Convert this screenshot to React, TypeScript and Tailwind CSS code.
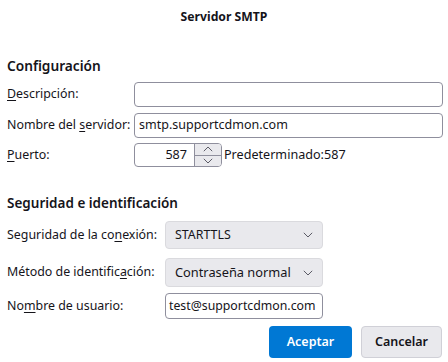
import React from "react";

const Chevron = ({ up = false, className = "" }: { up?: boolean; className?: string }) => (
  <svg width="10" height="6" viewBox="0 0 10 6" className={className} fill="none">
    <path d={up ? "M0.8 5.2 L5 1 L9.2 5.2" : "M0.8 0.8 L5 5 L9.2 0.8"} stroke="#5b5b66" strokeWidth="1" />
  </svg>
);

const U = ({ children }: { children: React.ReactNode }) => <span className="underline underline-offset-2">{children}</span>;

export default function App() {
  return (
    <div
      className="w-[448px] h-[362px] bg-white text-[#15141a] text-[12.4px] pl-[7px] pr-[5px] overflow-hidden whitespace-nowrap"
      style={{ fontFamily: '"Noto Sans", "Open Sans", sans-serif' }}
    >
      <div className="h-[34px] flex items-center justify-center font-bold text-[12.2px] pr-[2px]">Servidor SMTP</div>

      <div className="mt-[22px] h-[20px] flex items-center font-semibold text-[13.7px]">Configuración</div>

      <div className="mt-[6px] h-[25px] flex items-center">
        <div className="w-[127px]"><U>D</U>escripción:</div>
        <div className="flex-1 h-full border border-[#8f8f9d] rounded-[4px] bg-white" />
      </div>

      <div className="mt-[6px] h-[25px] flex items-center">
        <div className="w-[127px]">Nombre del <U>s</U>ervidor:</div>
        <div className="flex-1 h-full border border-[#8f8f9d] rounded-[4px] bg-white flex items-center px-[4px] text-[12.5px]">smtp.supportcdmon.com</div>
      </div>

      <div className="mt-[5px] h-[24px] flex items-center">
        <div className="w-[127px]"><U>P</U>uerto:</div>
        <div className="w-[88px] h-full border border-[#8f8f9d] rounded-[4px] bg-white flex overflow-hidden">
          <div className="flex-1 flex items-center justify-end pr-[7px] text-[12.6px]">587</div>
          <div className="w-[27px] flex flex-col border-l border-[#8f8f9d]">
            <div className="flex-1 bg-[#e9e9ed] flex items-center justify-center border-b border-[#8f8f9d]"><Chevron up /></div>
            <div className="flex-1 bg-[#e9e9ed] flex items-center justify-center"><Chevron /></div>
          </div>
        </div>
        <div className="ml-[2px] text-[12.6px]">Predeterminado:587</div>
      </div>

      <div className="mt-[26px] h-[20px] flex items-center font-semibold text-[13.5px]">Seguridad e identificación</div>

      <div className="mt-[8px] h-[28px] flex items-center">
        <div className="w-[158px]">Seguridad de la co<U>n</U>exión:</div>
        <div className="w-[158px] h-full bg-[#e9e9ed] border border-[#dadade] rounded-[4px] flex items-center justify-between pl-[9px] pr-[9px]">
          <span>STARTTLS</span>
          <Chevron />
        </div>
      </div>

      <div className="mt-[9px] h-[29px] flex items-center">
        <div className="w-[158px]">Método de identific<U>a</U>ción:</div>
        <div className="w-[158px] h-full bg-[#e9e9ed] border border-[#dadade] rounded-[4px] flex items-center justify-between pl-[9px] pr-[9px]">
          <span className="text-[12.8px]">Contraseña normal</span>
          <Chevron />
        </div>
      </div>

      <div className="mt-[6px] h-[26px] flex items-center">
        <div className="w-[158px]">No<U>m</U>bre de usuario:</div>
        <div className="w-[158px] h-full border border-[#8f8f9d] rounded-[4px] bg-white flex items-center px-[3px] overflow-hidden text-[12.3px]">test@supportcdmon.com</div>
      </div>

      <div className="mt-[7px] h-[32px] flex justify-end gap-[9px] pr-[1px]">
        <button className="w-[83px] h-full rounded-[4px] bg-[#0078d4] text-white font-semibold text-[12.5px]">Aceptar</button>
        <button className="w-[81px] h-full rounded-[4px] bg-[#e9e9ed] border border-[#d0d0d7] font-semibold text-[12.5px] text-[#15141a]">Cancelar</button>
      </div>
    </div>
  );
}
